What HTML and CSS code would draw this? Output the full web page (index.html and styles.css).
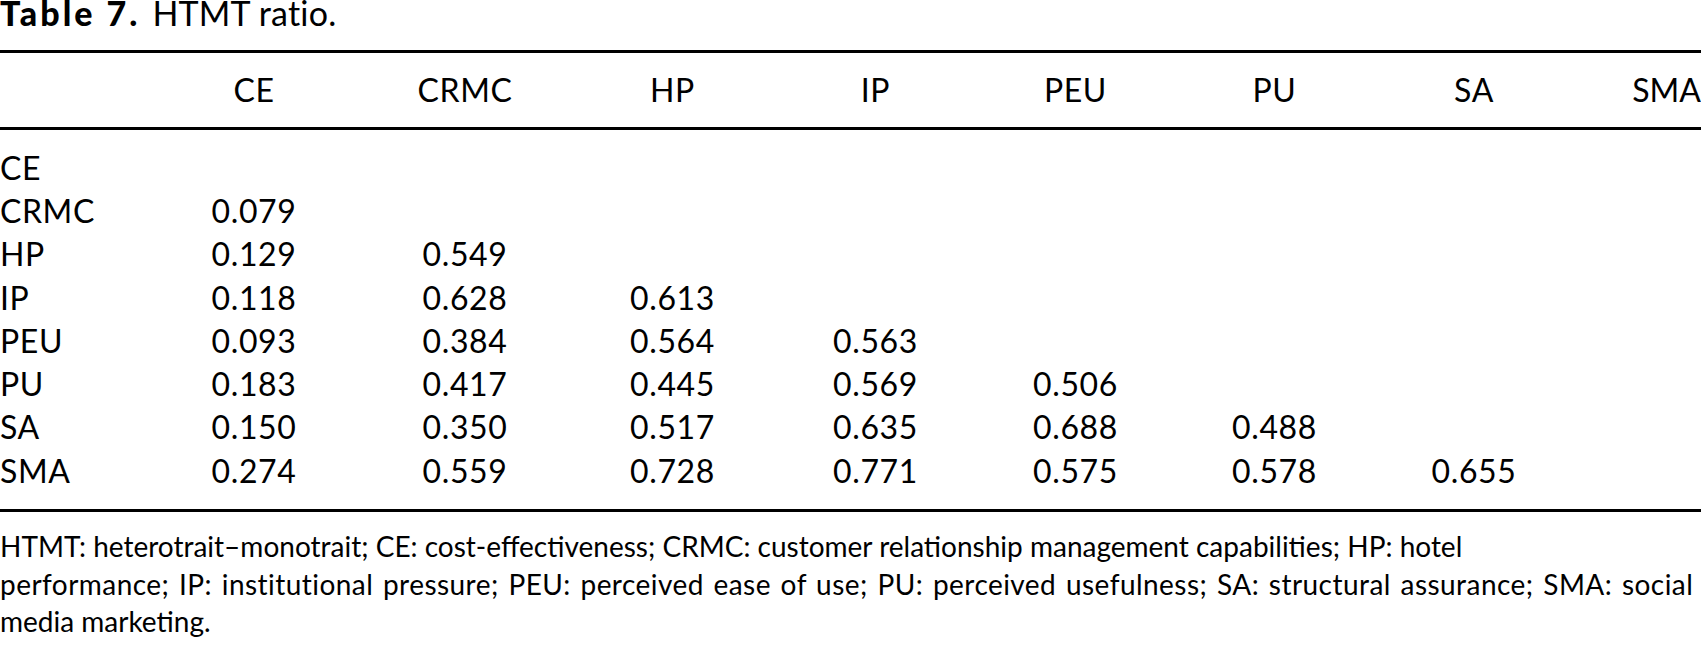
FILE: index.html
```html
<!DOCTYPE html>
<html lang="en">
<head>
<meta charset="utf-8">
<title>Table 7. HTMT ratio.</title>
<link rel="stylesheet" href="styles.css">
</head>
<body>
<div class="page">
  <p class="caption"><span class="caption-label">Table 7.</span><span class="caption-text">HTMT ratio.</span></p>
  <table class="htmt">
    <colgroup>
      <col class="c-label">
      <col class="c-ce">
      <col class="c-crmc">
      <col class="c-hp">
      <col class="c-ip">
      <col class="c-peu">
      <col class="c-pu">
      <col class="c-sa">
      <col class="c-sma">
    </colgroup>
    <thead>
      <tr>
        <th></th>
        <th>CE</th>
        <th>CRMC</th>
        <th>HP</th>
        <th>IP</th>
        <th>PEU</th>
        <th>PU</th>
        <th>SA</th>
        <th class="last">SMA</th>
      </tr>
    </thead>
    <tbody>
      <tr class="first"><th>CE</th><td></td><td></td><td></td><td></td><td></td><td></td><td></td><td></td></tr>
      <tr><th>CRMC</th><td>0.079</td><td></td><td></td><td></td><td></td><td></td><td></td><td></td></tr>
      <tr><th>HP</th><td>0.129</td><td>0.549</td><td></td><td></td><td></td><td></td><td></td><td></td></tr>
      <tr><th>IP</th><td>0.118</td><td>0.628</td><td>0.613</td><td></td><td></td><td></td><td></td><td></td></tr>
      <tr><th>PEU</th><td>0.093</td><td>0.384</td><td>0.564</td><td>0.563</td><td></td><td></td><td></td><td></td></tr>
      <tr><th>PU</th><td>0.183</td><td>0.417</td><td>0.445</td><td>0.569</td><td>0.506</td><td></td><td></td><td></td></tr>
      <tr><th>SA</th><td>0.150</td><td>0.350</td><td>0.517</td><td>0.635</td><td>0.688</td><td>0.488</td><td></td><td></td></tr>
      <tr class="final"><th>SMA</th><td>0.274</td><td>0.559</td><td>0.728</td><td>0.771</td><td>0.575</td><td>0.578</td><td>0.655</td><td></td></tr>
    </tbody>
  </table>
  <p class="note">
    <span class="note-line">HTMT: heterotrait–monotrait; CE: cost-effectiveness; CRMC: customer relationship management capabilities; HP: hotel</span>
    <span class="note-line note-line-wide">performance; IP: institutional pressure; PEU: perceived ease of use; PU: perceived usefulness; SA: structural assurance; SMA: social</span>
    <span class="note-line">media marketing.</span>
  </p>
</div>
</body>
</html>
```

FILE: styles.css
```css
html, body {
  margin: 0;
  padding: 0;
  background: #ffffff;
}

body {
  font-family: "Lato", "Open Sans", sans-serif;
  color: #000000;
  overflow: hidden;
}

.page {
  width: 1701px;
}

.caption {
  margin: 0 0 24px 0;
  font-size: 34px;
  line-height: 26px;
  white-space: nowrap;
}

.caption-label {
  font-weight: 900;
  letter-spacing: 3px;
  margin-right: 12px;
}

.caption-text {
  letter-spacing: 0.2px;
}

.htmt {
  width: 1701px;
  table-layout: fixed;
  border-collapse: collapse;
  border-spacing: 0;
  font-size: 32px;
  line-height: 32px;
  letter-spacing: 0.6px;
}

.c-label { width: 148px; }
.c-ce { width: 212px; }
.c-crmc { width: 210px; }
.c-hp { width: 205px; }
.c-ip { width: 201px; }
.c-peu { width: 199px; }
.c-pu { width: 199px; }
.c-sa { width: 200px; }
.c-sma { width: 127px; }

.htmt thead tr {
  border-top: 3px solid #000;
  border-bottom: 3px solid #000;
}

.htmt thead th {
  height: 74px;
  padding: 0;
  font-weight: 400;
  text-align: center;
  vertical-align: middle;
  white-space: nowrap;
}

.htmt thead th.last {
  text-align: right;
  letter-spacing: 0;
}

.htmt tbody th,
.htmt tbody td {
  height: 43.3px;
  padding: 0;
  vertical-align: middle;
  white-space: nowrap;
}

.htmt tbody th {
  font-weight: 400;
  text-align: left;
}

.htmt tbody td {
  text-align: center;
}

.htmt tbody tr.first th,
.htmt tbody tr.first td {
  padding-top: 16px;
}

.htmt tbody tr.final {
  border-bottom: 3px solid #000;
}

.htmt tbody tr.final th,
.htmt tbody tr.final td {
  padding-bottom: 17px;
}

.note {
  margin: 16px 0 0 0;
  font-size: 28px;
  line-height: 37.5px;
  white-space: nowrap;
}

.note-line {
  display: block;
}

.note-line-wide {
  letter-spacing: 0.45px;
  word-spacing: 2.1px;
}
```
